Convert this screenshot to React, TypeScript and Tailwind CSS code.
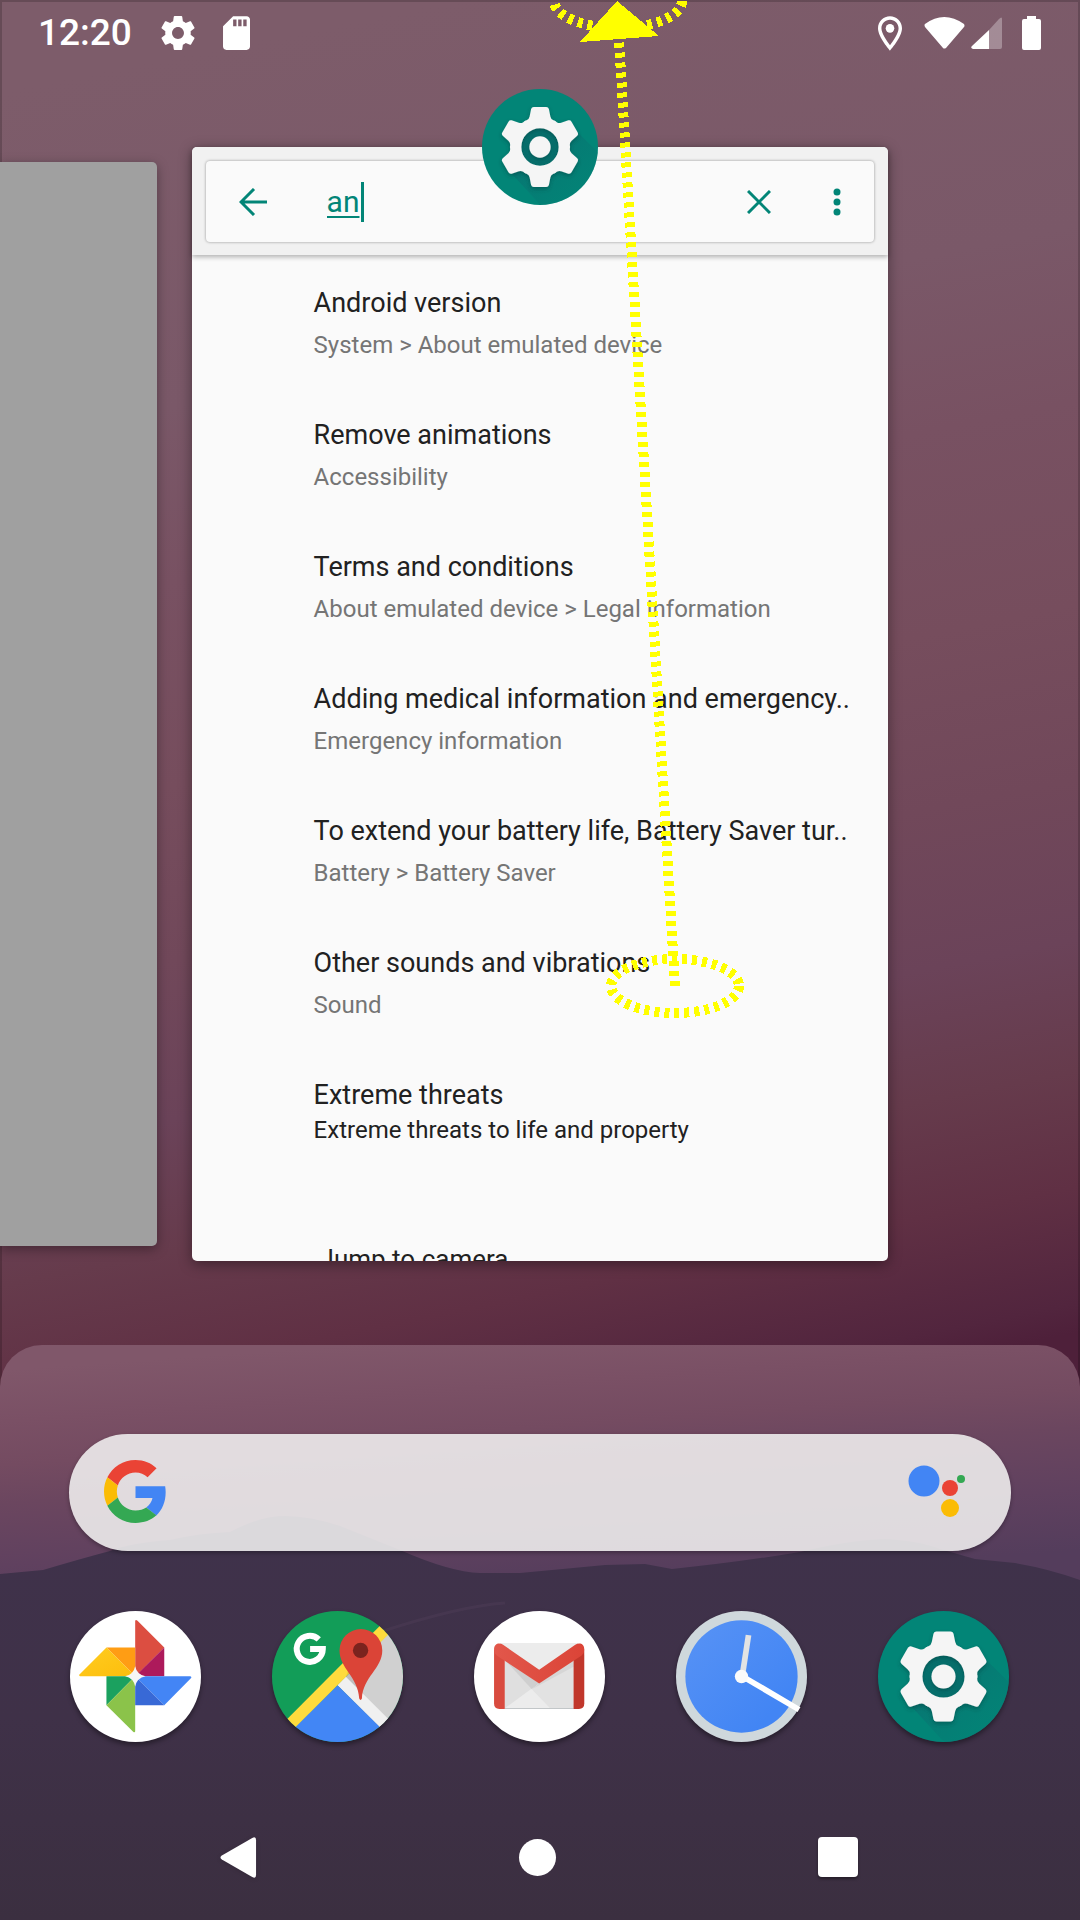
import React from "react";

const results = [
  { title: "Android version", path: "System > About emulated device" },
  { title: "Remove animations", path: "Accessibility" },
  { title: "Terms and conditions", path: "About emulated device > Legal information" },
  { title: "Adding medical information and emergency..", path: "Emergency information" },
  { title: "To extend your battery life, Battery Saver tur..", path: "Battery > Battery Saver" },
  { title: "Other sounds and vibrations", path: "Sound" },
];

const toothAngles = [0, 60, 120, 180, 240, 300];

function Wallpaper() {
  return (
    <svg className="absolute inset-0 h-full w-full" viewBox="0 0 1080 1920" preserveAspectRatio="none" aria-hidden="true">
      <defs>
        <linearGradient id="sky" gradientUnits="userSpaceOnUse" x1="460" y1="0" x2="740" y2="1400">
          <stop offset="0" stopColor="#7d5c6a" />
          <stop offset="0.24" stopColor="#7a5868" />
          <stop offset="0.36" stopColor="#785162" />
          <stop offset="0.5" stopColor="#764d5d" />
          <stop offset="0.62" stopColor="#71485a" />
          <stop offset="0.73" stopColor="#6b4359" />
          <stop offset="0.82" stopColor="#663b4c" />
          <stop offset="0.9" stopColor="#603044" />
          <stop offset="0.98" stopColor="#52253e" />
          <stop offset="1" stopColor="#4e203a" />
        </linearGradient>
      </defs>
      <rect width="1080" height="1920" fill="url(#sky)" />
      <path d="M0 1H1080M1 0V1500M1079 0V1500" stroke="#000" strokeOpacity="0.18" strokeWidth="2" fill="none" />
    </svg>
  );
}

function Hills() {
  return (
    <svg className="absolute inset-0 h-full w-full" viewBox="0 1345 1080 575" preserveAspectRatio="none" aria-hidden="true">
      <defs>
        <linearGradient id="dusk" gradientUnits="userSpaceOnUse" x1="500" y1="1335" x2="518" y2="1590">
          <stop offset="0" stopColor="#80576a" />
          <stop offset="0.2" stopColor="#7a5065" />
          <stop offset="0.37" stopColor="#744b61" />
          <stop offset="0.52" stopColor="#6b465f" />
          <stop offset="0.76" stopColor="#60415f" />
          <stop offset="1" stopColor="#543d5c" />
        </linearGradient>
        <linearGradient id="hill" x1="0" y1="0" x2="0" y2="1">
          <stop offset="0" stopColor="#3f324b" />
          <stop offset="0.5" stopColor="#3f3148" />
          <stop offset="1" stopColor="#3b2f40" />
        </linearGradient>
      </defs>
      <rect y="1345" width="1080" height="575" fill="url(#dusk)" />
      <path
        d="M0 1574L43 1570Q80 1559 110 1551Q130 1543 170 1540Q200 1533 230 1532Q260 1516 285 1516Q310 1516 340 1526L400 1550Q450 1572 480 1573L520 1573L605 1565L645 1564L672 1569Q740 1562 800 1552Q850 1540 885 1539Q920 1541 940 1549L975 1559L1015 1563Q1050 1569 1080 1580V1920H0Z"
        fill="url(#hill)"
      />
      <path d="M380 1632Q460 1606 505 1603" stroke="#54415b" strokeOpacity="0.35" strokeWidth="3" fill="none" />
    </svg>
  );
}

function SettingsIcon({ id, className }: { id: string; className: string }) {
  return (
    <svg className={className} viewBox="-196 -196 392 392" aria-hidden="true">
      <defs>
        <clipPath id={id + "-disc"}>
          <circle r="196" />
        </clipPath>
        <linearGradient id={id + "-shade"} x1="0" y1="0" x2="1" y2="1">
          <stop offset="0.2" stopColor="#0b6b6e" />
          <stop offset="1" stopColor="#028577" stopOpacity="0" />
        </linearGradient>
        <filter id={id + "-soft"} x="-20%" y="-20%" width="140%" height="150%">
          <feDropShadow dx="0" dy="7" stdDeviation="7" floodColor="#003c38" floodOpacity="0.45" />
        </filter>
      </defs>
      <circle r="196" fill="#028577" />
      <g clipPath={`url(#${id}-disc)`}>
        <path d="M127 -50L260 80V260H60L-100 85Z" fill={`url(#${id}-shade)`} opacity="0.6" />
      </g>
      <circle r="66" fill="#06706d" />
      <g filter={`url(#${id}-soft)`} fill="#f5f5f5">
        <path d="M0 -83A83 83 0 1 1 0 83A83 83 0 1 1 0 -83ZM0 -63A63 63 0 1 0 0 63A63 63 0 1 0 0 -63Z" fillRule="evenodd" />
        {toothAngles.map((angle) => (
          <path
            key={angle}
            transform={`rotate(${angle})`}
            d="M-40 -68L-54 -86L-44 -91Q-37 -94 -35 -103L-30 -128Q-28 -135 -21 -135H21Q28 -135 30 -128L35 -103Q37 -94 44 -91L54 -86L40 -68Z"
          />
        ))}
        <circle r="36" />
      </g>
    </svg>
  );
}

function GoogleG() {
  return (
    <svg className="mb-[2px] h-[63px] w-[63px]" viewBox="0 0 48 48" aria-hidden="true">
      <path fill="#EA4335" d="M24 9.5c3.54 0 6.71 1.22 9.21 3.6l6.85-6.85C35.9 2.38 30.47 0 24 0 14.62 0 6.51 5.38 2.56 13.22l7.98 6.19C12.43 13.72 17.74 9.5 24 9.5z" />
      <path fill="#4285F4" d="M46.98 24.55c0-1.57-.15-3.09-.38-4.55H24v9.02h12.94c-.58 2.96-2.26 5.48-4.78 7.18l7.73 6c4.51-4.18 7.09-10.36 7.09-17.65z" />
      <path fill="#FBBC05" d="M10.53 28.59c-.48-1.45-.76-2.99-.76-4.59s.27-3.14.76-4.59l-7.98-6.19C.92 16.46 0 20.12 0 24c0 3.88.92 7.54 2.56 10.78l7.97-6.19z" />
      <path fill="#34A853" d="M24 48c6.48 0 11.93-2.13 15.89-5.81l-7.73-6c-2.15 1.45-4.92 2.3-8.16 2.3-6.26 0-11.57-4.22-13.47-9.91l-7.98 6.19C6.51 42.62 14.62 48 24 48z" />
    </svg>
  );
}

function PhotosIcon() {
  return (
    <svg className="h-full w-full" viewBox="210 153 392 392" aria-hidden="true">
      <defs>
        <linearGradient id="petal" x1="0" y1="0" x2="1" y2="1">
          <stop offset="0" stopColor="#ffcd20" />
          <stop offset="1" stopColor="#fdbd0c" />
        </linearGradient>
      </defs>
      <circle cx="406" cy="349" r="196" fill="#fff" />
      <path d="M405 183Q406 177 412 182L492 262L405 349Z" fill="#dc4e41" />
      <path d="M492 262V348H405Z" fill="#ad1a5b" />
      <path d="M319 262H405V348Z" fill="#ff9d14" />
      <path d="M319 262L405 348H240Q235 346 239 342Z" fill="url(#petal)" />
      <path d="M319 348H405L319 435Z" fill="#1ba15f" />
      <path d="M405 348V513Q404 518 399 514L319 435Z" fill="#8bc34a" />
      <path d="M405 348H570Q576 350 571 355L492 435Z" fill="#4385f5" />
      <path d="M405 348L492 435H405Z" fill="#3869d6" />
      <path d="M405 318Q410 343 436 348Q410 353 405 379Q400 353 375 348Q400 343 405 318Z" fill="#f6f6f6" />
    </svg>
  );
}

function MapsIcon() {
  return (
    <svg className="h-full w-full" viewBox="816 153 392 392" aria-hidden="true">
      <defs>
        <clipPath id="maps-disc">
          <circle cx="1012" cy="349" r="196" />
        </clipPath>
      </defs>
      <g clipPath="url(#maps-disc)">
        <path d="M816 153H1208V545H816Z" fill="#129d58" />
        <path d="M1012 375L1220 165V545H1180Z" fill="#d0d0d0" />
        <path d="M1012 375L1037 350L1180 492L1155 516Z" fill="#f0f0f0" />
        <path d="M1012 375L1190 551H834Z" fill="#4286f5" />
        <path d="M843 495L1157 179L1182 205L868 519Z" fill="#fedb3d" />
      </g>
      <path d="M1072 258L1037 350L1075 388L1081 419Z" fill="#000" opacity="0.08" />
      <path d="M1082 207A64 64 0 0 1 1146 271C1146 325 1088 350 1085 415Q1081 423 1077 415C1074 350 1018 325 1018 271A64 64 0 0 1 1082 207Z" fill="#db4437" />
      <circle cx="1081" cy="271" r="23" fill="#7b231e" />
      <path d="M956 238A39 39 0 1 0 968 267H930" fill="none" stroke="#fff" strokeWidth="18" />
    </svg>
  );
}

function GmailIcon() {
  return (
    <svg className="h-full w-full" viewBox="162 153 392 392" aria-hidden="true">
      <defs>
        <linearGradient id="flap" x1="0" y1="0" x2="1" y2="0">
          <stop offset="0" stopColor="#e2574b" />
          <stop offset="1" stopColor="#db4437" />
        </linearGradient>
      </defs>
      <circle cx="358" cy="349" r="196" fill="#fff" />
      <path d="M240 249H474V446H240Z" fill="#ececec" />
      <path d="M254 300L335 385L254 444Z" fill="#dfdfdf" />
      <path d="M254 300L357 369L335 387Z" fill="#cfcfcf" />
      <path d="M335 387L460 300V446H392Z" fill="#e2e2e2" />
      <path d="M335 387L357 369L460 300V320Z" fill="#d6d6d6" />
      <path d="M254 445H460" stroke="#c2c6c8" strokeWidth="3" />
      <path d="M222 268L254 285V446H238Q222 446 222 430Z" fill="#d94b3f" />
      <path d="M492 268L460 285V446H476Q492 446 492 430Z" fill="#c1372b" />
      <path d="M222 268C222 250 238 246 249 254L357 329L465 254C478 246 492 251 492 268Q492 280 484 286L357 370L230 286Q222 280 222 268Z" fill="url(#flap)" />
    </svg>
  );
}

function ClockIcon() {
  return (
    <svg className="h-full w-full" viewBox="768 153 392 392" aria-hidden="true">
      <defs>
        <linearGradient id="dial" x1="0" y1="0" x2="1" y2="1">
          <stop offset="0.1" stopColor="#5591f5" />
          <stop offset="0.8" stopColor="#4285f4" />
        </linearGradient>
      </defs>
      <circle cx="964" cy="349" r="196" fill="#cfd8dc" />
      <circle cx="964" cy="349" r="168" fill="url(#dial)" />
      <path d="M966 349L985 225" stroke="#e3e3e3" strokeWidth="17" />
      <path d="M964 347L1136 448" stroke="#fff" strokeWidth="17" />
      <circle cx="964" cy="349" r="20" fill="#fafafa" />
    </svg>
  );
}

function StatusBar() {
  return (
    <header className="flex h-[66px] shrink-0 items-center px-[38px] text-white">
      <time className="text-[37px] leading-[44px] font-medium">12:20</time>
      <svg className="ml-[29px] h-[34px] w-[34px]" viewBox="2 2 20 20" fill="currentColor" role="img" aria-label="Settings notification">
        <path d="M19.43 12.98c.04-.32.07-.64.07-.98s-.03-.66-.07-.98l2.11-1.65c.19-.15.24-.42.12-.64l-2-3.46c-.12-.22-.39-.3-.61-.22l-2.49 1c-.52-.4-1.08-.73-1.69-.98l-.38-2.65C14.46 2.18 14.25 2 14 2h-4c-.25 0-.46.18-.49.42l-.38 2.65c-.61.25-1.17.59-1.69.98l-2.49-1c-.23-.09-.49 0-.61.22l-2 3.46c-.13.22-.07.49.12.64l2.11 1.65c-.04.32-.07.65-.07.98s.03.66.07.98l-2.11 1.65c-.19.15-.24.42-.12.64l2 3.46c.12.22.39.3.61.22l2.49-1c.52.4 1.08.73 1.69.98l.38 2.65c.03.24.24.42.49.42h4c.25 0 .46-.18.49-.42l.38-2.65c.61-.25 1.17-.59 1.69-.98l2.49 1c.23.09.49 0 .61-.22l2-3.46c.12-.22.07-.49-.12-.64l-2.11-1.65zM12 15.5c-1.93 0-3.5-1.57-3.5-3.5s1.57-3.5 3.5-3.5 3.5 1.57 3.5 3.5-1.57 3.5-3.5 3.5z" />
      </svg>
      <svg className="ml-[28px] h-[34px] w-[27px]" viewBox="4 2 16 20" fill="currentColor" role="img" aria-label="SD card">
        <path d="M18 2h-8L4.02 8 4 20c0 1.100.9 2 2 2h12c1.100 0 2-.9 2-2V4c0-1.100-.9-2-2-2zm-6 6h-2V4h2v4zm3 0h-2V4h2v4zm3 0h-2V4h2v4z" />
      </svg>
      <div className="mr-[1px] ml-auto flex items-center">
        <svg className="h-[35px] w-[24px]" viewBox="5 2 14 20" fill="currentColor" role="img" aria-label="Location">
          <path fillRule="evenodd" d="M12 2C8.130 2 5 5.130 5 9c0 5.250 7 13 7 13s7-7.750 7-13c0-3.870-3.130-7-7-7zM7 9c0-2.760 2.240-5 5-5s5 2.240 5 5c0 2.880-2.880 7.190-5 9.880C9.920 16.210 7 11.850 7 9z" />
          <circle cx="12" cy="9" r="2.500" />
        </svg>
        <svg className="ml-[22px] h-[32px] w-[41px]" viewBox="0 0 41 32" fill="currentColor" role="img" aria-label="Wi-Fi">
          <path d="M1 7Q20 -7 40 7Q41 9 40 10L22 31Q20 32 19 31L1 10Q0 8 1 7Z" />
        </svg>
        <svg className="ml-[6px] h-[32px] w-[31px]" viewBox="0 0 31 32" fill="currentColor" role="img" aria-label="Mobile signal">
          <path d="M31 2V30Q31 32 29 32H18V13L28 2Q31 -1 31 2Z" opacity="0.3" />
          <path d="M18 13V32H2Q-1 31 1 29Z" />
        </svg>
        <svg className="ml-[20px] h-[34px] w-[19px]" viewBox="0 0 19 34" fill="currentColor" role="img" aria-label="Battery full">
          <path d="M5 0H14V3H17Q19 3 19 5V32Q19 34 17 34H2Q0 34 0 32V5Q0 3 2 3H5Z" />
        </svg>
      </div>
    </header>
  );
}

function SettingsCard() {
  return (
    <article className="relative flex h-full w-[64.5%] shrink-0 flex-col rounded-[5px] bg-[#fafafa] shadow-[0_3px_14px_rgba(0,0,0,0.4)]">
      <div className="rounded-t-[5px] bg-[#f1f1f1] px-[14px] pt-[14px] pb-[13px] shadow-[0_2px_5px_rgba(0,0,0,0.3)]">
        <div className="flex h-[81px] items-center rounded-[4px] bg-[#fafafa] text-[#028577] shadow-[0_0_3px_rgba(0,0,0,0.4)]">
          <button className="ml-[33px]" aria-label="Back">
            <svg className="h-[28px] w-[29px]" viewBox="0 0 29 28" fill="none" stroke="currentColor" strokeWidth="3" aria-hidden="true">
              <path d="M28 14H2M15 1L2 14L15 27" />
            </svg>
          </button>
          <div className="ml-[59px] flex min-w-0 flex-1 items-center">
            <input
              aria-label="Search settings"
              className="h-[44px] w-[34px] bg-transparent text-[30px] leading-[44px] underline decoration-2 underline-offset-[4px] outline-none"
              defaultValue="an"
            />
            <span className="h-[40px] w-[3px] bg-[#028577]" />
          </div>
          <button className="mr-[62px]" aria-label="Clear search">
            <svg className="h-[24px] w-[24px]" viewBox="0 0 24 24" stroke="currentColor" strokeWidth="3" aria-hidden="true">
              <path d="M1 1L23 23M23 1L1 23" />
            </svg>
          </button>
          <button className="mr-[33px]" aria-label="More options">
            <svg className="h-[28px] w-[8px]" viewBox="0 0 8 28" fill="currentColor" aria-hidden="true">
              <circle cx="4" cy="4" r="3.500" />
              <circle cx="4" cy="14" r="3.500" />
              <circle cx="4" cy="24" r="3.500" />
            </svg>
          </button>
        </div>
      </div>
      <ul className="min-h-0 flex-1 overflow-hidden rounded-b-[5px] pt-[28px] pl-[122px] whitespace-nowrap text-[#212121]">
        {results.map((item) => (
          <li key={item.title} className="h-[132px]">
            <h2 className="text-[27px] leading-[40px]">{item.title}</h2>
            <p className="mt-[4px] text-[24px] leading-[36px] text-[#757575]">{item.path}</p>
          </li>
        ))}
        <li className="h-[164px]">
          <h2 className="text-[27px] leading-[40px]">Extreme threats</h2>
          <p className="text-[24px] leading-[30px]">Extreme threats to life and property</p>
        </li>
        <li className="pl-[6px] text-[26px] leading-[40px]">Jump to camera</li>
      </ul>
      <div className="absolute -top-[58px] left-1/2 -ml-[58px]">
        <SettingsIcon id="task" className="h-[116px] w-[116px]" />
      </div>
    </article>
  );
}

function Dock() {
  const apps = [
    { name: "Photos", icon: <PhotosIcon /> },
    { name: "Maps", icon: <MapsIcon /> },
    { name: "Gmail", icon: <GmailIcon /> },
    { name: "Clock", icon: <ClockIcon /> },
    { name: "Settings", icon: <SettingsIcon id="dock" className="h-full w-full" /> },
  ];
  return (
    <div className="relative mt-[60px] flex justify-between pr-[71px] pl-[70px]">
      {apps.map((app) => (
        <button key={app.name} aria-label={app.name} className="h-[131px] w-[131px] rounded-full shadow-[0_3px_5px_rgba(0,0,0,0.4)]">
          {app.icon}
        </button>
      ))}
    </div>
  );
}

function NavBar() {
  return (
    <nav className="relative mt-auto flex h-[126px] items-center justify-between pr-[222px] pl-[219px] text-white">
      <button aria-label="Back">
        <svg className="h-[43px] w-[38px] drop-shadow-sm" viewBox="0 0 40 44" preserveAspectRatio="none" fill="currentColor" aria-hidden="true">
          <path d="M3 20L35 2Q39 0 39 4V40Q39 44 35 42L3 24Q0 22 3 20Z" />
        </svg>
      </button>
      <button aria-label="Home" className="h-[37px] w-[37px] rounded-full bg-white" />
      <button aria-label="Recent apps" className="h-[40px] w-[40px] rounded-[4px] bg-white shadow-[0_2px_3px_rgba(0,0,0,0.4)]" />
    </nav>
  );
}

function SwipeGesture() {
  return (
    <svg className="pointer-events-none absolute inset-0 h-full w-full" viewBox="0 0 1080 1920" preserveAspectRatio="none" fill="none" stroke="#ff0" strokeWidth="10" shapeRendering="crispEdges" aria-hidden="true">
      <ellipse cx="675" cy="986" rx="64" ry="27" strokeDasharray="5 5" />
      <ellipse cx="618" cy="1" rx="64" ry="27" strokeDasharray="5 5" />
      <path d="M675 986L619 40" strokeDasharray="5 5" />
      <path d="M617 1L580 42L659 36Z" fill="#ff0" stroke="none" />
    </svg>
  );
}

export default function App() {
  return (
    <div className="relative flex h-screen flex-col overflow-hidden bg-[#7c5b6a] font-[Roboto,sans-serif]">
      <Wallpaper />
      <div className="relative flex min-h-0 flex-1 flex-col">
        <StatusBar />
        <main className="flex min-h-0 flex-1 gap-[35px] pt-[81px] pb-[84px]">
          <div className="my-[15px] w-[14.5%] shrink-0 rounded-r-[5px] bg-[#a0a0a0] shadow-[0_3px_12px_rgba(0,0,0,0.35)]" />
          <SettingsCard />
        </main>
      </div>
      <section className="relative flex h-[575px] shrink-0 flex-col overflow-hidden rounded-t-[42px]">
        <Hills />
        <div className="relative mx-[69px] mt-[89px] flex h-[117px] items-center rounded-full bg-[#f1f0f0]/88 px-[35px] shadow-[0_2px_4px_rgba(0,0,0,0.3)]">
          <GoogleG />
          <input aria-label="Google search" className="h-full min-w-0 flex-1 bg-transparent px-6 text-[32px] outline-none" />
          <button aria-label="Google Assistant" className="mb-[4px]">
            <svg className="mr-[10px] h-[54px] w-[58px]" viewBox="908 1464 58 54" aria-hidden="true">
              <circle cx="924" cy="1481" r="15.500" fill="#4285f4" />
              <circle cx="950" cy="1488" r="8" fill="#ea4335" />
              <circle cx="961" cy="1479" r="4" fill="#34a853" />
              <circle cx="950" cy="1508" r="9" fill="#fbbc05" />
            </svg>
          </button>
        </div>
        <Dock />
        <NavBar />
      </section>
      <SwipeGesture />
    </div>
  );
}
